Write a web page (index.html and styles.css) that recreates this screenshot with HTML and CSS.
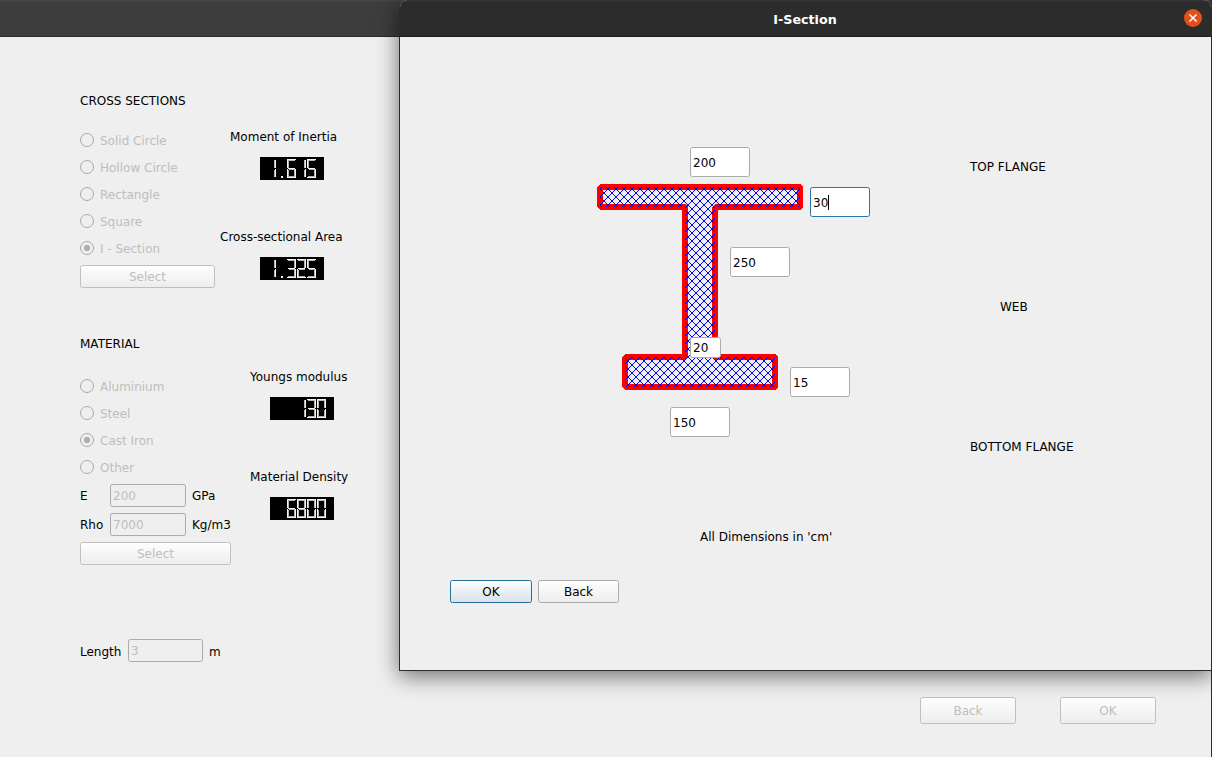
FILE: index.html
```html
<!DOCTYPE html>
<html lang="en">
<head>
<meta charset="utf-8">
<title>I-Section</title>
<link rel="stylesheet" href="styles.css">
</head>
<body>
<svg class="defs" width="0" height="0" aria-hidden="true">
  <defs>
    <g id="sa"><rect class="hi" x="0" y="0" width="9" height="1"/><rect class="lo" x="1" y="1" width="7" height="1"/></g>
    <g id="sb"><rect class="lo" x="7" y="1" width="1" height="8"/><rect class="hi" x="8" y="1" width="1" height="8"/></g>
    <g id="sc"><rect class="lo" x="7" y="11" width="1" height="7"/><rect class="hi" x="8" y="10" width="1" height="8"/></g>
    <g id="sd"><rect class="lo" x="1" y="17" width="7" height="1"/><rect class="hi" x="0" y="18" width="9" height="1"/></g>
    <g id="se"><rect class="hi" x="0" y="10" width="1" height="8"/><rect class="lo" x="1" y="11" width="1" height="7"/></g>
    <g id="sf"><rect class="hi" x="0" y="1" width="1" height="8"/><rect class="lo" x="1" y="1" width="1" height="8"/></g>
    <g id="sg"><rect class="hi" x="1" y="9" width="7" height="1"/><rect class="lo" x="2" y="10" width="6" height="1"/></g>
    <g id="d0"><use href="#sa"/><use href="#sb"/><use href="#sc"/><use href="#sd"/><use href="#se"/><use href="#sf"/></g>
    <g id="d1"><use href="#sb"/><use href="#sc"/></g>
    <g id="d2"><use href="#sa"/><use href="#sb"/><use href="#sg"/><use href="#se"/><use href="#sd"/></g>
    <g id="d3"><use href="#sa"/><use href="#sb"/><use href="#sg"/><use href="#sc"/><use href="#sd"/></g>
    <g id="d5"><use href="#sa"/><use href="#sf"/><use href="#sg"/><use href="#sc"/><use href="#sd"/></g>
    <g id="d6"><use href="#d5"/><use href="#se"/></g>
    <g id="d8"><use href="#d0"/><use href="#sg"/></g>
    <rect id="dp" class="hi" x="4" y="17" width="2" height="2"/>
  </defs>
</svg>

<div class="main-window">
  <div class="main-title"></div>
  <div class="main-body">
    <div class="choices">
      <h2>CROSS SECTIONS</h2>
      <div class="radios">
        <div class="radio"><i></i>Solid Circle</div>
        <div class="radio"><i></i>Hollow Circle</div>
        <div class="radio"><i></i>Rectangle</div>
        <div class="radio"><i></i>Square</div>
        <div class="radio on"><i></i>I - Section</div>
      </div>
      <div class="button off select-section">Select</div>
      <h2 class="material">MATERIAL</h2>
      <div class="radios">
        <div class="radio"><i></i>Aluminium</div>
        <div class="radio"><i></i>Steel</div>
        <div class="radio on"><i></i>Cast Iron</div>
        <div class="radio"><i></i>Other</div>
      </div>
      <div class="field-row"><span class="name">E</span><span class="input off">200</span><span>GPa</span></div>
      <div class="field-row"><span class="name">Rho</span><span class="input off">7000</span><span>Kg/m3</span></div>
      <div class="button off select-material">Select</div>
      <div class="field-row length"><span class="name">Length</span><span class="input off">3</span><span class="unit">m</span></div>
    </div>
    <div class="readouts">
      <div class="readout inertia"><span>Moment of Inertia</span>
        <svg class="lcd" viewBox="0 0 64 23" role="img" aria-label="1.615"><use href="#d1" x="7" y="2"/><use href="#dp" x="17" y="2"/><use href="#d6" x="27" y="2"/><use href="#d1" x="37" y="2"/><use href="#d5" x="47" y="2"/></svg></div>
      <div class="readout area"><span>Cross-sectional Area</span>
        <svg class="lcd" viewBox="0 0 64 23" role="img" aria-label="1.325"><use href="#d1" x="7" y="2"/><use href="#dp" x="17" y="2"/><use href="#d3" x="27" y="2"/><use href="#d2" x="37" y="2"/><use href="#d5" x="47" y="2"/></svg></div>
      <div class="readout modulus"><span>Youngs modulus</span>
        <svg class="lcd" viewBox="0 0 64 23" role="img" aria-label="130"><use href="#d1" x="27" y="2"/><use href="#d3" x="37" y="2"/><use href="#d0" x="47" y="2"/></svg></div>
      <div class="readout density"><span>Material Density</span>
        <svg class="lcd" viewBox="0 0 64 23" role="img" aria-label="6800"><use href="#d6" x="17" y="2"/><use href="#d8" x="27" y="2"/><use href="#d0" x="37" y="2"/><use href="#d0" x="47" y="2"/></svg></div>
    </div>
    <div class="main-actions">
      <div class="button off">Back</div>
      <div class="button off">OK</div>
    </div>
  </div>
</div>

<div class="dialog">
  <div class="dialog-title">
    <span>I-Section</span>
    <svg class="close" viewBox="0 0 18 18"><circle cx="9" cy="9" r="9" fill="#e2501c"/><path d="M5.5 5.5l7 7M12.5 5.5l-7 7" stroke="#fff" stroke-width="1.5"/></svg>
  </div>
  <div class="dialog-body">
    <div class="sketch">
      <svg class="beam" viewBox="0 0 206 206" shape-rendering="crispEdges">
        <defs>
          <pattern id="hatch" width="8" height="8" x="3" y="5" patternUnits="userSpaceOnUse">
            <path fill="#00f" d="M0 0h1v1H0zM7 0h1v1H7zM1 1h1v1H1zM6 1h1v1H6zM2 2h1v1H2zM5 2h1v1H5zM3 3h2v2H3zM2 5h1v1H2zM5 5h1v1H5zM1 6h1v1H1zM6 6h1v1H6zM0 7h1v1H0zM7 7h1v1H7z"/>
          </pattern>
        </defs>
        <path d="M3 3H203V23H118V173H178V203H28V173H88V23H3Z" fill="none" stroke="#f00" stroke-width="6" stroke-linejoin="bevel"/>
        <path d="M3 3H203V23H118V173H178V203H28V173H88V23H3Z" fill="url(#hatch)"/>
      </svg>
      <span class="input top-width">200</span>
      <span class="input top-depth focus">30<b></b></span>
      <span class="input web-height">250</span>
      <span class="input web-depth">20</span>
      <span class="input bottom-depth">15</span>
      <span class="input bottom-width">150</span>
    </div>
    <div class="parts">
      <span>TOP FLANGE</span>
      <span class="web">WEB</span>
      <span>BOTTOM FLANGE</span>
    </div>
    <p class="note">All Dimensions in 'cm'</p>
    <div class="dialog-actions">
      <div class="button default">OK</div>
      <div class="button">Back</div>
    </div>
  </div>
</div>
</body>
</html>
```
FILE: styles.css
```css
* { box-sizing: border-box; }

body {
  position: relative;
  width: 1212px;
  height: 757px;
  margin: 0;
  overflow: hidden;
  background: #efefef;
  color: #000;
  font: 12px/14px "DejaVu Sans", sans-serif;
  white-space: nowrap;
}

.defs { position: absolute; }

/* controls */
.button {
  display: flex;
  align-items: center;
  justify-content: center;
  height: 23px;
  border: 1px solid #ababab;
  border-radius: 2.5px;
  background: linear-gradient(#fefefe, #ededed);
}
.button.off { border-color: #c0c0c0; color: #bebebe; }
.button.default {
  border-color: #256f9f;
  background: linear-gradient(#fcfdfe, #dae2e9);
}

.input {
  display: flex;
  flex: none;
  align-items: center;
  width: 60px;
  height: 30px;
  padding-left: 2px;
  border: 1px solid #ababab;
  border-radius: 2.5px;
  background: #fff;
}
.input.off { background: #efefef; color: #bebebe; }
.input.focus { border-color: #2a75a3; }
.input.focus b { width: 1px; height: 15px; margin-top: -1px; background: #000; }

.radio {
  display: flex;
  align-items: center;
  gap: 6px;
  height: 27px;
  color: #bebebe;
}
.radio i {
  width: 14px;
  height: 14px;
  margin-top: -2px;
  border: 1px solid #a9a9a9;
  border-radius: 50%;
}
.radio.on i { background: radial-gradient(circle, #adadad 2.8px, transparent 3.4px); }

/* main window */
.main-window { height: 757px; border-right: 1px solid #2c2c2c; }
.main-title {
  height: 37px;
  background: linear-gradient(#4a4a4a, #3d3d3d 2px);
  border-bottom: 1px solid #2a2a2a;
}
.main-body {
  display: grid;
  grid-template: 660px 60px / 140px 1fr;
  padding-left: 80px;
}
.choices { padding-top: 57px; }
h2 { margin: 0; font: inherit; }
.radios { margin-top: 19px; }
.select-section { width: 135px; margin-top: 3px; }
.material { margin-top: 49px; }
.material + .radios { margin-top: 22px; }
.select-material { width: 151px; margin-top: 6px; }
.field-row { display: flex; align-items: center; gap: 6px; height: 23px; margin-top: 6px; }
.radios + .field-row { margin-top: 3px; }
.field-row .name { flex: none; width: 24px; }
.field-row .input { width: 76px; height: 23px; }
.length { margin-top: 74px; }
.length .name { width: 42px; padding-top: 2px; }
.length .unit { padding-top: 2px; }
.length .input { width: 75px; }

.readouts { padding-top: 93px; }
.readout { display: flex; flex-direction: column; height: 100px; }
.lcd { width: 64px; height: 23px; margin-top: 13px; background: #000; shape-rendering: crispEdges; }
.hi { fill: #f4f4f0; }
.lo { fill: #b4b4b0; }
.inertia { padding-left: 10px; }
.inertia .lcd { margin-left: 30px; }
.area { height: 140px; }
.area .lcd { margin-left: 40px; }
.modulus, .density { padding-left: 30px; }
.modulus .lcd, .density .lcd { margin-left: 20px; }

.main-actions { grid-column: 1 / -1; display: flex; gap: 44px; justify-content: flex-end; padding-right: 55px; }
.main-actions .button { width: 96px; height: 27px; }

/* section dialog */
.dialog {
  position: absolute;
  top: 0;
  left: 399px;
  width: 813px;
  height: 671px;
  border: solid #2b2b2b;
  border-width: 0 1px 1px;
  border-radius: 8px 8px 0 0;
  background: #efefef;
  box-shadow: 0 5px 22px rgba(0, 0, 0, 0.55);
}
.dialog-title {
  display: grid;
  grid-template-columns: 1fr auto 1fr;
  align-items: center;
  height: 37px;
  padding-right: 9px;
  border-radius: 7px 7px 0 0;
  border-bottom: 1px solid #1f1f1f;
  background: linear-gradient(#393939, #2c2c2c 2px);
  color: #fff;
  font-size: 12.7px;
  font-weight: bold;
}
.dialog-title span { grid-column: 2; padding: 3px 0 0 8px; }
.close { justify-self: end; width: 18px; height: 18px; }
.dialog-body {
  display: grid;
  grid-template: 493px 50px 23px / 570px 1fr;
}
.sketch { position: relative; }
.beam { position: absolute; left: 197px; top: 147px; width: 206px; height: 206px; }
.sketch .input { position: absolute; padding-top: 2px; }
.top-width { left: 290px; top: 110px; }
.top-depth { left: 410px; top: 150px; }
.web-height { left: 330px; top: 210px; }
.sketch .web-depth { left: 290px; top: 300px; width: 31px; height: 21px; padding-top: 0; }
.bottom-depth { left: 390px; top: 330px; }
.bottom-width { left: 270px; top: 370px; }
.parts { display: flex; flex-direction: column; gap: 126px; padding-top: 123px; }
.web { padding-left: 30px; }
.note { grid-column: 1 / -1; margin: 0 0 0 300px; }
.dialog-actions { display: flex; gap: 6px; padding-left: 50px; }
.dialog-actions .button { width: 81px; }
.dialog-actions .default { width: 82px; }
```
